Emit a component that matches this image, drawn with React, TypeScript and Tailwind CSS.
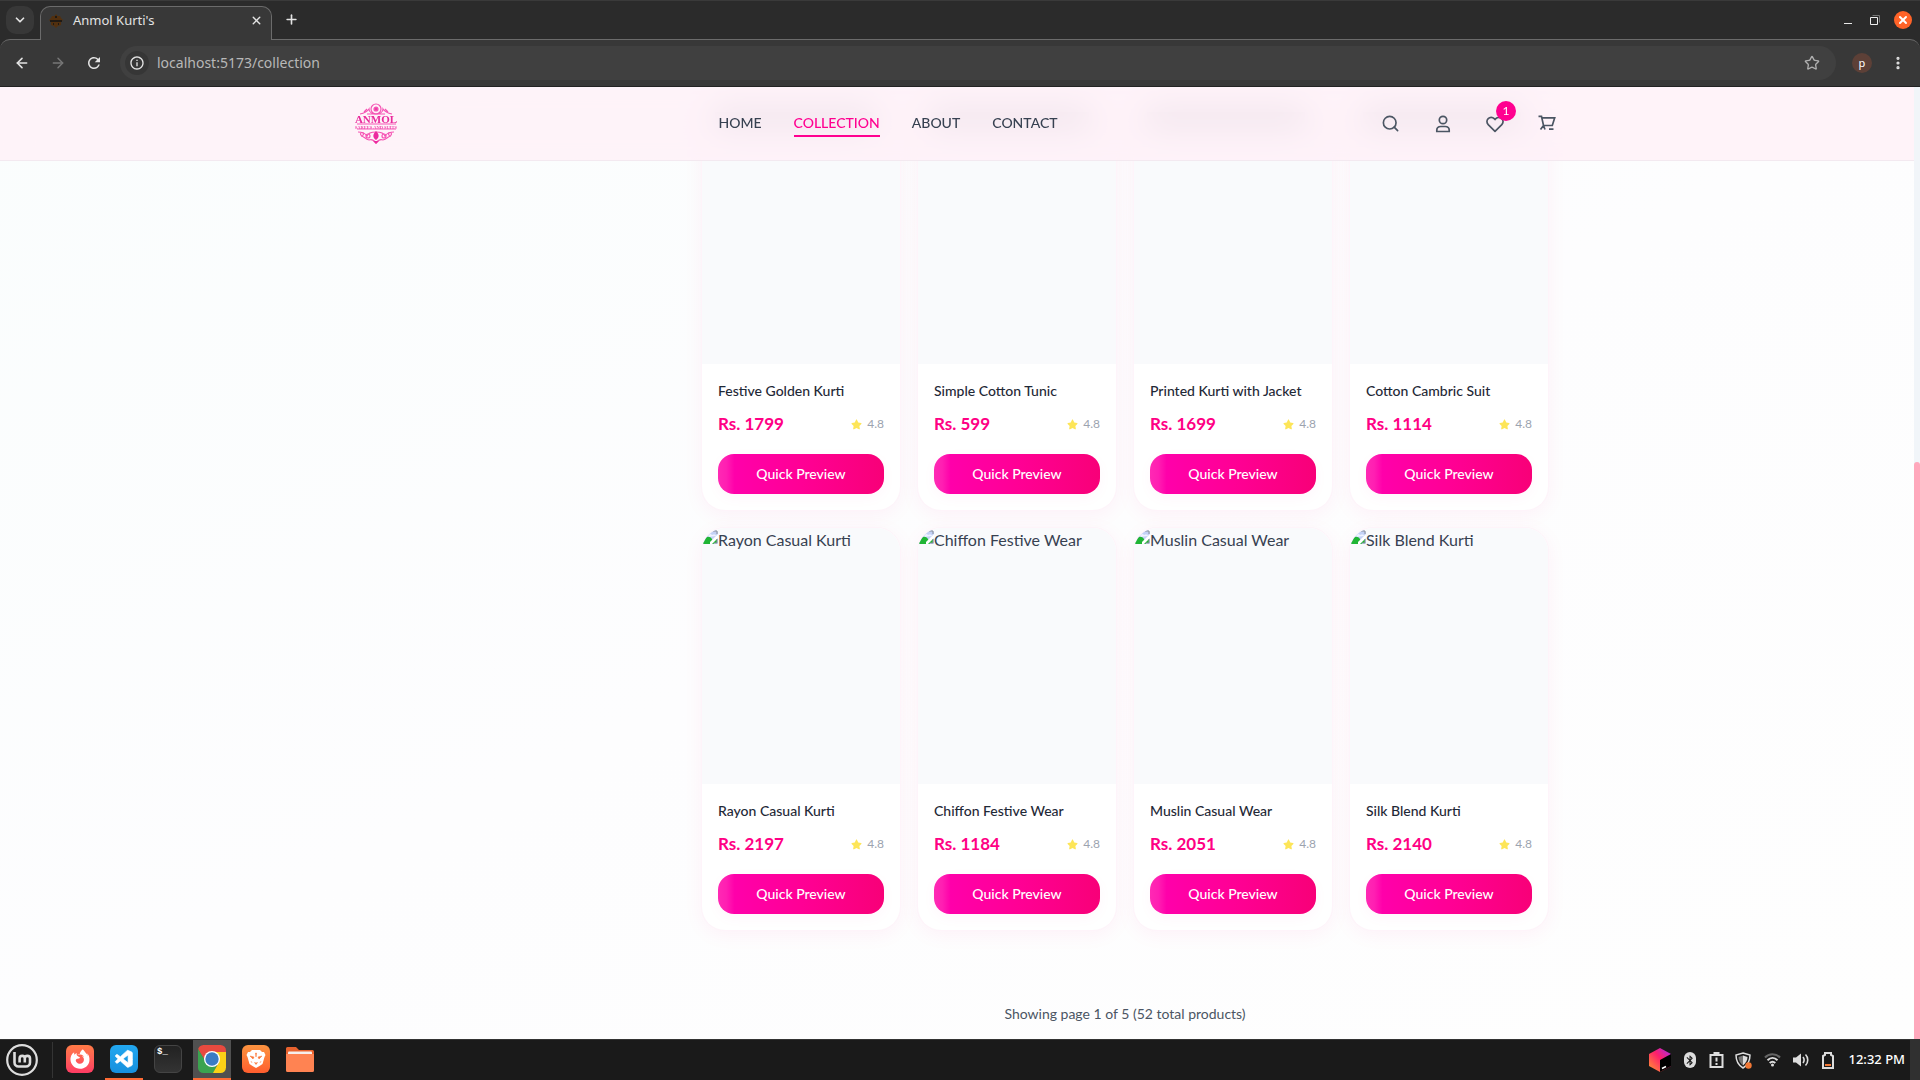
import React from "react";
import { Search, X, Plus, ChevronDown, ArrowLeft, ArrowRight, Star, EllipsisVertical } from "lucide-react";
import { FaFirefoxBrowser, FaStar } from "react-icons/fa6";
import { VscVscode } from "react-icons/vsc";
import { MdRefresh, MdInfoOutline, MdBluetooth } from "react-icons/md";

const products = [
  { name: "Festive Golden Kurti", price: 1799, hidden: true },
  { name: "Simple Cotton Tunic", price: 599, hidden: true },
  { name: "Printed Kurti with Jacket", price: 1699, hidden: true },
  { name: "Cotton Cambric Suit", price: 1114, hidden: true },
  { name: "Rayon Casual Kurti", price: 2197, hidden: false },
  { name: "Chiffon Festive Wear", price: 1184, hidden: false },
  { name: "Muslin Casual Wear", price: 2051, hidden: false },
  { name: "Silk Blend Kurti", price: 2140, hidden: false },
];

const links = ["HOME", "COLLECTION", "ABOUT", "CONTACT"];

function BrowserBar() {
  return (
    <header className="shrink-0 bg-[#2b2b2b] font-['Noto_Sans',sans-serif] text-[#e3e3e3]">
      <div className="flex h-[39px] items-start border-t border-[#3a3a3a]">
        <button aria-label="Search tabs" className="mt-[5px] ml-1.5 flex size-7 items-center justify-center rounded-[10px] bg-[#383838]">
          <ChevronDown size={14} strokeWidth={3} />
        </button>
        <div className="mt-[5px] ml-1.5 flex h-[34px] w-[232px] items-center rounded-t-[10px] border border-b-0 border-[#6b6b6b] bg-[#383838] pr-2 pb-1.5 pl-2">
          <svg width="14" height="14" viewBox="0 0 14 14" aria-hidden="true">
            <path d="M7 0l1.500 2L11 2l1 2 2 2-2 2 0 3-3 1-2 2-2-2-3-1 0-3-2-2 2-2 1-2 2.500 0z" fill="#52300f" />
            <path d="M1 6h12v2H1zM6 2h2v2H6zM4 9h1v2H4zM9 9h1v2H9z" fill="#201a14" />
          </svg>
          <span className="ml-2.5 flex-1 text-[13px]">Anmol Kurti's</span>
          <button aria-label="Close tab"><X size={13} strokeWidth={2.600} /></button>
        </div>
        <button aria-label="New tab" className="mt-[11px] ml-3"><Plus size={15} strokeWidth={2.600} /></button>
        <div className="ml-auto flex h-[38px] items-center gap-4 pr-2">
          <button aria-label="Minimize" className="mt-1.5 h-px w-2 bg-[#e8e8e8]" />
          <button aria-label="Restore" className="px-0.5">
            <svg width="10" height="10" viewBox="0 0 10 10" fill="none">
              <path d="M2.500 .5h7v7" stroke="#777" />
              <path d="M.5 2.500h7v7h-7z" stroke="#eee" />
            </svg>
          </button>
          <button aria-label="Close window" className="-ml-1 flex size-[18px] items-center justify-center rounded-full bg-[#ff6328] text-white">
            <X size={12} strokeWidth={4} />
          </button>
        </div>
      </div>
      <div className="flex h-12 items-center rounded-t-[10px] border-t border-b border-t-[#6b6b6b] border-b-[#222] bg-[#383838] pr-3.5 pl-3.5">
        <button aria-label="Back"><ArrowLeft size={16} strokeWidth={2.400} /></button>
        <button aria-label="Forward" className="ml-5 text-[#777]"><ArrowRight size={16} strokeWidth={2.200} /></button>
        <button aria-label="Reload" className="ml-[19px]"><MdRefresh size={18} /></button>
        <div className="ml-[17px] flex h-[34px] flex-1 items-center rounded-full bg-[#404040] pr-4 pl-[5px]">
          <span className="flex size-6 items-center justify-center rounded-full bg-[#363636]"><MdInfoOutline size={16} /></span>
          <input aria-label="Address" className="ml-2 min-w-0 flex-1 bg-transparent text-sm text-[#b8b8b8] outline-none" defaultValue="localhost:5173/collection" />
          <button aria-label="Bookmark" className="text-[#b0b0b0]"><Star size={16} /></button>
        </div>
        <button aria-label="Profile" className="ml-4 flex size-5 items-center justify-center rounded-full bg-[#5d4037] text-[11px] text-white">p</button>
        <button aria-label="Menu" className="ml-[18px]"><EllipsisVertical size={16} strokeWidth={2.800} /></button>
      </div>
    </header>
  );
}

function Logo() {
  return (
    <svg width="44" height="44" viewBox="0 0 44 44" fill="none" role="img" aria-label="Anmol">
      <g stroke="#f556b5" strokeWidth="1.200">
        <circle cx="21" cy="7" r="5" />
        <circle cx="21" cy="7" r="2" fill="#f03aa8" />
        <path d="M5 12c5-1 7-2 9-5 0 3 3 5 7 5s7-2 7-5c2 3 4 4 9 5M9 10l3-3M33 10l-3-3M12 12h18" />
        <path d="M2 22h39M2 27h39" />
        <path d="M3 30c5 0 7 1 9 4 1-3 4-4 9-4s8 1 9 4c2-3 4-4 9-4M6 34c3 0 4 3 8 4M36 34c-3 0-4 3-8 4M14 38c3-1 5 0 7 3 2-3 4-4 7-3" />
        <circle cx="7" cy="32" r="1.500" /><circle cx="35" cy="32" r="1.500" />
        <circle cx="13" cy="34" r="2" /><circle cx="29" cy="34" r="2" />
      </g>
      <path d="M21 29c4 4 3 7 0 9-3-2-4-5 0-9zM18 39l3 3 3-3z" fill="#ec2a9f" />
      <text x="21" y="20.500" textAnchor="middle" fontFamily="Liberation Serif, serif" fontWeight="700" fontSize="11" fill="#e82a9c">ANMOL</text>
      <text x="21" y="26.500" textAnchor="middle" fontFamily="Liberation Serif, serif" fontWeight="700" fontSize="4.500" fill="#f04fb0">SAREES AND SUITS</text>
    </svg>
  );
}

function SiteHeader() {
  return (
    <header className="relative z-10 border-b border-[#f3e9f0] bg-[#fff0f8]/80 backdrop-blur-lg">
      <div className="mx-auto flex h-[73px] max-w-7xl items-center justify-between pr-[41px] pl-[38px]">
        <a href="#home" className="w-14"><Logo /></a>
        <nav className="flex gap-8 pr-4 text-sm font-medium text-[#374151]">
          {links.map((l) => (
            <a key={l} href={"#" + l.toLowerCase()} className={l === "COLLECTION" ? "border-b-2 border-[#ff0090] pt-0.5 pb-0.5 text-[#ff0090]" : "border-b-2 border-transparent pt-0.5 pb-0.5"}>{l}</a>
          ))}
        </nav>
        <div className="flex items-center gap-[34px] text-[#4b5563]">
          <button aria-label="Search"><Search size={19} strokeWidth={2.100} /></button>
          <button aria-label="Account">
            <svg width="18" height="18" viewBox="0 0 18 18" fill="none" stroke="currentColor" strokeWidth="1.700">
              <circle cx="9" cy="5" r="3.700" />
              <path d="M2.800 16.500v-1.300c0-2.300 1.800-3.700 4-3.700h4.400c2.200 0 4 1.400 4 3.700v1.300z" />
            </svg>
          </button>
          <button aria-label="Wishlist" className="relative">
            <svg width="18" height="18" viewBox="0 0 18 18" fill="none" stroke="currentColor" strokeWidth="1.700" strokeLinejoin="round">
              <path d="M9 16.300L2.200 9.600a4.200 4.200 0 0 1 0-6 4.200 4.200 0 0 1 6 0l.8.900.8-.9a4.200 4.200 0 0 1 6 0 4.200 4.200 0 0 1 0 6z" />
            </svg>
            <span className="absolute -top-3.5 -right-3 flex size-5 items-center justify-center rounded-full bg-[#ff0090] text-xs text-white">1</span>
          </button>
          <button aria-label="Cart" className="pb-0.5">
            <svg width="18" height="16" viewBox="0 0 18 16" fill="none" stroke="currentColor" strokeWidth="1.700">
              <path d="M.5 1.300h3l2 9.200h8.800l2.400-7.700H4M5.500 10.500l-3 4M5.500 10.500l1.500 4M11 14.200h4.500" />
            </svg>
          </button>
        </div>
      </div>
    </header>
  );
}

function BrokenImage() {
  return (
    <svg width="15" height="17" viewBox="0 0 15 17" aria-hidden="true" className="shrink-0">
      <path d="M0 0h10l5 4v12H0z" fill="#c3d1f6" />
      <path d="M5 9c0-3 3-4 4-2 3-1 4 0 4 1z" fill="#eef2ff" />
      <path d="M0 16v-2c2-5 6-7 9-3l2 5zM14 10v5h-5z" fill="#20b535" />
      <path d="M15 6L7 14v2h2l6-6z" fill="#fff" />
      <path d="M10 0v3h4v3M14 11v4h-3" fill="none" stroke="#8b8f98" />
    </svg>
  );
}

function ProductCard({ name, price, hidden }: { name: string; price: number; hidden: boolean }) {
  return (
    <article className="overflow-hidden rounded-3xl border border-[#fef4fa] bg-white shadow-[0_4px_20px_rgba(255,0,144,0.05)]">
      <div className="flex h-64 items-start overflow-hidden bg-[#f9fafc] pl-px text-base whitespace-nowrap text-[#374151]">
        {hidden ? (
          <span aria-hidden="true" className="mt-1 ml-3 h-3 w-4/5 bg-[#374151]/60" />
        ) : (
          <span className="flex"><BrokenImage />{name}</span>
        )}
      </div>
      <div className="p-4">
        <h3 className="mb-2 h-[22px] truncate text-sm leading-[22px] font-medium text-[#1f2937]">{name}</h3>
        <div className="mb-4 flex h-7 items-center justify-between">
          <span className="text-[17px] leading-7 font-bold text-[#ff0084]">Rs. {price}</span>
          <span className="flex items-center gap-[5px] text-xs text-[#9ca3af]"><FaStar size={11} className="text-[#fde558]" />4.8</span>
        </div>
        <button className="h-10 w-full rounded-2xl bg-[linear-gradient(90deg,#ff29b4_0%,#ff1fb2_5%,#ff00aa_10%,#ff0095_50%,#f80078_100%)] text-sm font-medium text-white shadow-[0_4px_14px_rgba(255,0,144,0.04)]">Quick Preview</button>
      </div>
    </article>
  );
}

function Taskbar() {
  return (
    <footer className="flex h-[41px] shrink-0 items-center justify-between border-t border-[#333] bg-[#1a1a1a] text-white">
      <div className="flex h-full items-center">
        <button aria-label="Menu" className="ml-1.5">
          <svg width="32" height="32" viewBox="0 0 32 32" fill="none" stroke="#ddd">
            <circle cx="16" cy="16" r="14.800" strokeWidth="2.200" />
            <path d="M8.500 8v10.500a4 4 0 0 0 4 4h7.500a4 4 0 0 0 4-4v-4a2.500 2.500 0 0 0-5.200 0v4M18.800 14.500a2.600 2.600 0 0 0-5.200 0v4" strokeWidth="2.600" />
          </svg>
        </button>
        <span className="mr-[5px] ml-3.5 h-9 w-px bg-[#343434]" />
        <button aria-label="Firefox" className="flex h-full w-11 items-center justify-center pb-0.5">
          <span className="flex size-7 items-center justify-center rounded-md bg-linear-to-b from-[#ff7a45] to-[#ff3a63]"><FaFirefoxBrowser size={20} /></span>
        </button>
        <button aria-label="Visual Studio Code" className="flex h-full w-11 items-center justify-center px-[3px]">
          <span className="flex h-full w-full items-center justify-center border-b-2 border-b-[#ff6b35]">
            <span className="flex size-7 items-center justify-center rounded-md bg-linear-to-b from-[#22a7f0] to-[#1590dd]"><VscVscode size={21} strokeWidth={0.5} /></span>
          </span>
        </button>
        <button aria-label="Terminal" className="flex h-full w-11 items-center justify-center pb-0.5">
          <span className="flex size-7 rounded-md border border-[#444] bg-linear-to-b from-[#222] to-[#333] px-0.5 font-['Liberation_Mono',monospace] text-[9px] font-bold">$_</span>
        </button>
        <button aria-label="Chrome" className="flex h-full w-11 items-center justify-center px-[3px]">
          <span className="flex h-full w-full items-center justify-center border-b-2 border-b-[#ff6b35] bg-[#505050]">
            <svg width="28" height="28" viewBox="0 0 28 28">
              <defs><clipPath id="tile"><rect width="28" height="28" rx="5.500" /></clipPath></defs>
              <g clipPath="url(#tile)">
                <path d="M0 0h28v8H14L7 16 0 4z" fill="#e84a3f" />
                <path d="M0 4l8 13 11 2-3 9H0z" fill="#3ba34f" />
                <path d="M14 7h14v21H15l6-11z" fill="#fcd116" />
              </g>
              <circle cx="14" cy="14" r="8" fill="#fff" />
              <circle cx="14" cy="14" r="6.700" fill="#3b7cc4" />
            </svg>
          </span>
        </button>
        <button aria-label="Brave" className="flex h-full w-11 items-center justify-center pb-0.5">
          <span className="flex size-7 items-center justify-center rounded-md bg-linear-to-b from-[#fb9340] to-[#ff5d2e]">
            <svg width="20" height="20" viewBox="0 0 20 20">
              <path d="M6 1h8l2 2 2 0 1.500 3-1 2-2 7-3 2L10 19l-3.500-2-3-2-2-7-1-2L2 3h2z" fill="#fff" />
              <path d="M4 7l4 1-1 2zM16 7l-4 1 1 2zM8.500 13.500l1.500.5 1.500-.5-1.500 2zM9.500 4h1l-.5 4zM5 12l1 2M15 12l-1 2" fill="#fa7434" stroke="#fa7434" strokeWidth=".5" />
            </svg>
          </span>
        </button>
        <button aria-label="Files" className="flex h-full w-11 items-center justify-center pb-0.5">
          <svg width="28" height="26" viewBox="0 0 28 26">
            <path d="M0 2.500A1.500 1.500 0 0 1 1.500 1H10l3 3h13.500A1.500 1.500 0 0 1 28 5.500V10H0z" fill="#e8622e" />
            <rect x="2" y="5.500" width="24" height="4" rx="1" fill="#f6efec" />
            <path d="M0 8h28v16.500a1.500 1.500 0 0 1-1.500 1.500h-25A1.500 1.500 0 0 1 0 24.500z" fill="#ff8352" />
          </svg>
        </button>
      </div>
      <div className="flex h-full items-center">
        <svg width="24" height="26" viewBox="0 0 24 26" aria-hidden="true">
          <defs><linearGradient id="cube" x1="1" y1="0" x2="0" y2="1"><stop offset="0" stopColor="#a02cf0" /><stop offset=".45" stopColor="#ff1f6b" /><stop offset="1" stopColor="#ff9a2e" /></linearGradient></defs>
          <path d="M12 1l11 6v12l-11 6-11-6V7z" fill="url(#cube)" />
          <path d="M12 13l11-6v12l-11 6z" fill="#000" /><path d="M14 21.500l4-2" stroke="#fff" strokeWidth="1.500" />
        </svg>
        <span className="ml-3 flex h-4 w-3 items-center justify-center rounded-full bg-[#ddd] text-[#1a1a1a]"><MdBluetooth size={13} /></span>
        <svg className="ml-[13px]" width="15" height="16" viewBox="0 0 15 16" fill="none" stroke="#ddd" strokeWidth="2" aria-hidden="true">
          <path d="M1.500 3h12v12h-12zM5.500 3V1h4v2M7.500 5.500v4M7.500 11v2" />
        </svg>
        <svg className="ml-[11px]" width="17" height="17" viewBox="0 0 17 17" aria-hidden="true">
          <path d="M8 1l7 2c0 6-2 10-7 13C3 13 1 9 1 3z" fill="none" stroke="#ddd" strokeWidth="1.500" />
          <path d="M8 3.500v10C5 11 3.500 8 3.500 5z" fill="#777" /><path d="M8 3.500L12.500 5c0 3-1.500 6-4.500 8.500z" fill="#ddd" />
          <circle cx="13.500" cy="13.500" r="3.200" fill="#f27835" />
        </svg>
        <svg className="ml-3" width="17" height="14" viewBox="0 0 17 14" fill="none" strokeWidth="2" aria-hidden="true">
          <path d="M1 4.500c4-4.500 11-4.500 15 0" stroke="#666" />
          <path d="M3.500 7.300c3-3 7-3 10 0M5.700 10c2-1.800 3.600-1.800 5.600 0" stroke="#ddd" /><circle cx="8.500" cy="12" r="1.500" fill="#ddd" />
        </svg>
        <svg className="ml-3" width="17" height="14" viewBox="0 0 17 14" fill="none" stroke="#ddd" strokeWidth="1.600" aria-hidden="true">
          <path d="M0 4.500h3L8 .5v13l-5-4H0z" fill="#ddd" stroke="none" />
          <path d="M10 4c1.500 2 1.500 4 0 6M12.500 1.500c3 3 3 8 0 11" />
        </svg>
        <svg className="ml-3" width="12" height="17" viewBox="0 0 12 17" fill="none" aria-hidden="true">
          <path d="M1 4l2-1V1h6v2l2 1v12H1z" stroke="#ddd" strokeWidth="2" /><path d="M3 13h6" stroke="#f27835" strokeWidth="2" />
        </svg>
        <time className="ml-3.5 font-['Noto_Sans',sans-serif] text-[13px] font-medium whitespace-nowrap">12:32 PM</time>
        <span className="ml-[5px] h-full w-2.5 bg-[#303030]" />
      </div>
    </footer>
  );
}

export default function App() {
  return (
    <div className="flex h-screen flex-col overflow-hidden">
      <BrowserBar />
      <div className="flex min-h-0 flex-1 bg-linear-to-br from-[#fafdfd] via-[#fdfdfe] to-[#fefefe] font-['Lato',sans-serif]">
        <div className="min-w-0 flex-1 overflow-hidden">
          <SiteHeader />
          <main className="mx-auto -mt-[54px] grid max-w-7xl grid-cols-[288px_1fr] gap-12 px-12">
            <aside />
            <section>
              <div className="grid grid-cols-4 gap-4">
                {products.map((p) => <ProductCard key={p.name} {...p} />)}
              </div>
              <p className="mt-[73px] pb-10 text-center text-sm text-[#4b5563]">Showing page 1 of 5 (52 total products)</p>
            </section>
          </main>
        </div>
        <div className="flex w-1.5 flex-col bg-[#f1f5f9]">
          <div className="flex-[375]" />
          <div className="flex-[577] rounded-t-full bg-[#ffa8bc]" />
        </div>
      </div>
      <Taskbar />
    </div>
  );
}
